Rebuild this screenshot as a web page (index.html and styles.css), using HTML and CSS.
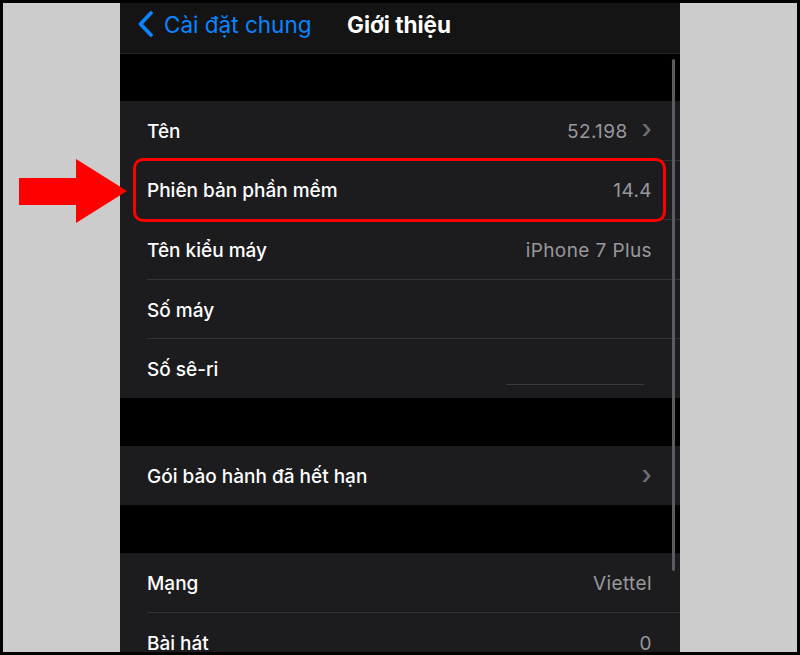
FILE: index.html
```html
<!DOCTYPE html>
<html lang="vi">
<head>
<meta charset="utf-8">
<link rel="stylesheet" href="styles.css">
</head>
<body>
<div class="frame">
  <div class="side"></div>
  <div class="phone">
    <div class="navbar">
      <div class="back">
        <svg class="back-icon" width="19" height="28" viewBox="0 0 19 28"><path d="M15 3 L4.5 14 L15 25" fill="none" stroke="#0a84ff" stroke-width="3.8" stroke-linecap="round" stroke-linejoin="round"/></svg>
        <span>Cài đặt chung</span>
      </div>
      <div class="title">Giới thiệu</div>
    </div>
    <div class="gap first"></div>
    <div class="group">
      <div class="row"><span class="label">Tên</span><span class="value">52.198</span><span class="chev">›</span></div>
      <div class="row"><span class="label">Phiên bản phần mềm</span><span class="value">14.4</span></div>
      <div class="row"><span class="label">Tên kiểu máy</span><span class="value">iPhone 7 Plus</span></div>
      <div class="row"><span class="label">Số máy</span><span class="value"></span></div>
      <div class="row last"><span class="label">Số sê-ri</span><span class="value"><span class="blank"></span></span></div>
    </div>
    <div class="gap"></div>
    <div class="group">
      <div class="row last"><span class="label">Gói bảo hành đã hết hạn</span><span class="value"></span><span class="chev">›</span></div>
    </div>
    <div class="gap"></div>
    <div class="group">
      <div class="row"><span class="label">Mạng</span><span class="value">Viettel</span></div>
      <div class="row"><span class="label">Bài hát</span><span class="value">0</span></div>
    </div>
    <div class="scrollbar"></div>
  </div>
  <div class="side"></div>
  <div class="highlight"></div>
  <svg class="arrow" width="110" height="66" viewBox="0 0 110 66"><polygon points="0,19 57,19 57,0 108,32 57,64 57,46 0,46" fill="#ff0000"/></svg>
</div>
</body>
</html>
```
FILE: styles.css
```css
html, body {
  margin: 0;
  padding: 0;
  background: #000;
}
.frame {
  position: relative;
  width: 800px;
  height: 655px;
  box-sizing: border-box;
  border: 3px solid #000;
  display: flex;
  overflow: hidden;
  font-family: Inter, "Noto Sans", sans-serif;
}
.side {
  flex: 1;
  background: #cccccc;
}
.phone {
  position: relative;
  width: 560px;
  background: #000;
  overflow: hidden;
}
.navbar {
  height: 51px;
  box-sizing: border-box;
  padding-bottom: 8px;
  background: #141414;
  border-bottom: 1px solid #262628;
  display: flex;
  align-items: center;
  position: relative;
}
.back {
  display: flex;
  align-items: center;
  color: #0a84ff;
  font-size: 22.5px;
  margin-left: 16px;
  gap: 9px;
}
.back-icon {
  display: block;
}
.title {
  position: absolute;
  left: 227px;
  top: 0;
  height: 43px;
  display: flex;
  align-items: center;
  color: #fff;
  font-weight: 700;
  font-size: 22.5px;
}
.gap {
  height: 48px;
}
.gap.first {
  height: 47px;
}
.group {
  background: #1c1c1e;
}
.row {
  box-sizing: border-box;
  height: 59.6px;
  padding-top: 2px;
  margin-left: 27px;
  padding-right: 28px;
  display: flex;
  align-items: center;
  border-bottom: 1px solid #333335;
  font-size: 19px;
  font-weight: 500;
}
.row.last {
  border-bottom: none;
  height: 59px;
}
.label {
  color: #fff;
  flex: 1;
}
.value {
  color: #98989d;
  font-weight: 400;
  letter-spacing: 0.4px;
}
.chev {
  color: #6e6e73;
  font-size: 26px;
  margin-left: 14px;
  line-height: 1;
  margin-top: -4px;
}
.blank {
  display: inline-block;
  width: 138px;
  height: 1px;
  background: #3a3a3c;
  margin-right: 8px;
  vertical-align: -12px;
}
.scrollbar {
  position: absolute;
  left: 552px;
  top: 56px;
  width: 3px;
  height: 512px;
  border-radius: 2px;
  background: #5c5c60;
}
.highlight {
  position: absolute;
  left: 130px;
  top: 155px;
  width: 527px;
  height: 58px;
  border: 3px solid #ff0000;
  border-radius: 10px;
}
.arrow {
  position: absolute;
  left: 16px;
  top: 156px;
}
```
